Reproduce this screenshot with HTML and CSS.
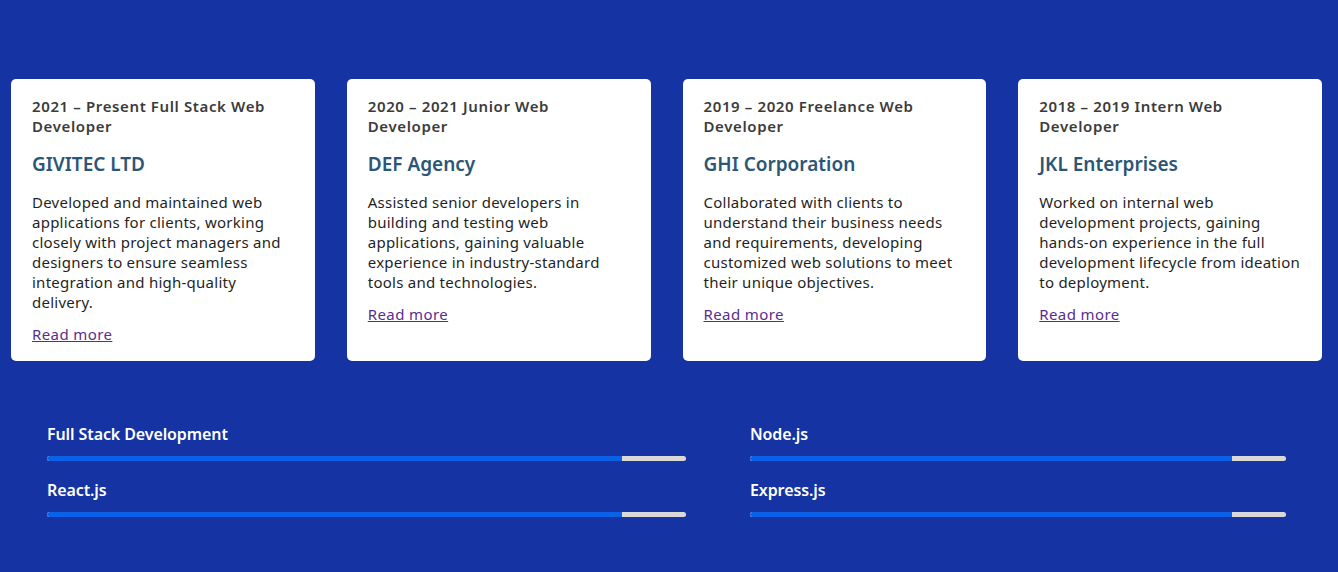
FILE: index.html
```html
<!DOCTYPE html>
<html lang="en">
<head>
<meta charset="utf-8">
<title>Experience</title>
<link rel="stylesheet" href="styles.css">
</head>
<body>
<main class="page">
  <section class="timeline">
    <article class="card">
      <h3 class="card-title">2021 – Present Full Stack Web Developer</h3>
      <h4 class="card-company">GIVITEC LTD</h4>
      <p class="card-text">Developed and maintained web applications for clients, working closely with project managers and designers to ensure seamless integration and high-quality delivery.</p>
      <a class="card-link" href="#">Read more</a>
    </article>
    <article class="card">
      <h3 class="card-title">2020 – 2021 Junior Web Developer</h3>
      <h4 class="card-company">DEF Agency</h4>
      <p class="card-text">Assisted senior developers in building and testing web applications, gaining valuable experience in industry-standard tools and technologies.</p>
      <a class="card-link" href="#">Read more</a>
    </article>
    <article class="card">
      <h3 class="card-title">2019 – 2020 Freelance Web Developer</h3>
      <h4 class="card-company">GHI Corporation</h4>
      <p class="card-text">Collaborated with clients to understand their business needs and requirements, developing customized web solutions to meet their unique objectives.</p>
      <a class="card-link" href="#">Read more</a>
    </article>
    <article class="card">
      <h3 class="card-title">2018 – 2019 Intern Web Developer</h3>
      <h4 class="card-company">JKL Enterprises</h4>
      <p class="card-text">Worked on internal web development projects, gaining hands-on experience in the full development lifecycle from ideation to deployment.</p>
      <a class="card-link" href="#">Read more</a>
    </article>
  </section>

  <section class="skills">
    <div class="skill">
      <span class="skill-name">Full Stack Development</span>
      <div class="bar"><div class="bar-fill" style="width: 90%"></div></div>
    </div>
    <div class="skill">
      <span class="skill-name">Node.js</span>
      <div class="bar"><div class="bar-fill" style="width: 90%"></div></div>
    </div>
    <div class="skill">
      <span class="skill-name">React.js</span>
      <div class="bar"><div class="bar-fill" style="width: 90%"></div></div>
    </div>
    <div class="skill">
      <span class="skill-name">Express.js</span>
      <div class="bar"><div class="bar-fill" style="width: 90%"></div></div>
    </div>
  </section>
</main>
</body>
</html>
```

FILE: styles.css
```css
* {
  box-sizing: border-box;
}

html, body {
  margin: 0;
  padding: 0;
}

body {
  background: #1533a3;
  font-family: "Noto Sans", "Open Sans", sans-serif;
  min-height: 572px;
}

.page {
  padding-top: 79px;
}

.timeline {
  display: grid;
  grid-template-columns: repeat(4, 1fr);
  gap: 32px;
  padding: 0 16px 0 11px;
}

.card {
  background: #ffffff;
  border-radius: 5px;
  padding: 17px 21px 17px 21px;
  display: flex;
  flex-direction: column;
  align-items: flex-start;
}

.card-title {
  margin: 0;
  font-size: 15px;
  line-height: 20px;
  font-weight: 600;
  letter-spacing: 0.62px;
  color: #3b3b3b;
}

.card-company {
  margin: 16px 0 0;
  font-size: 19px;
  line-height: 24px;
  font-weight: 600;
  color: #2b5676;
}

.card-text {
  margin: 16px 0 0;
  font-size: 15px;
  line-height: 20px;
  letter-spacing: 0.25px;
  color: #1f1f1f;
}

.card-link {
  margin-top: 12px;
  font-size: 15px;
  line-height: 20px;
  letter-spacing: 0.4px;
  color: #5b2c8f;
  text-decoration: underline;
}

.skills {
  display: grid;
  grid-template-columns: 639fr 536fr;
  column-gap: 64px;
  row-gap: 19px;
  padding: 63px 52px 0 47px;
}

.skill {
  display: flex;
  flex-direction: column;
  gap: 12px;
}

.skill-name {
  font-size: 16px;
  line-height: 20px;
  font-weight: 600;
  letter-spacing: -0.1px;
  color: #ffffff;
}

.bar {
  height: 5px;
  background: #d9d9d9;
  border-radius: 3px;
  overflow: hidden;
}

.bar-fill {
  height: 100%;
  background: #0b62e8;
  border-radius: 3px 0 0 3px;
}
```
